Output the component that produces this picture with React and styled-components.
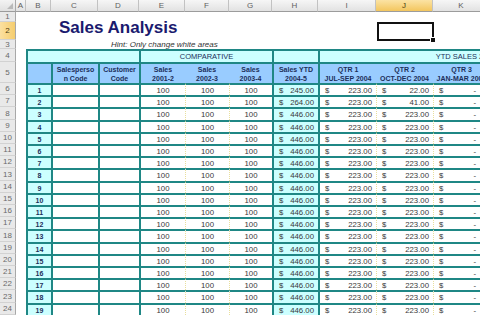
import React from 'react'
import styled, { createGlobalStyle, css } from 'styled-components'

const GlobalStyle = createGlobalStyle`
  html, body {
    margin: 0;
    padding: 0;
    width: 480px;
    height: 315px;
    overflow: hidden;
    background: #fff;
  }
  body {
    font-family: 'Liberation Sans', Arial, sans-serif;
  }
`

const TEAL = '#1f8785'
const CYAN = '#ccffff'
const BLUE = '#99ccff'
const DOT = '#e9df9c'
const NAVY = '#1c2f5a'

// sheet geometry: row header + columns A..M (only A..K show in the window)
const LETTERS = ['A', 'B', 'C', 'D', 'E', 'F', 'G', 'H', 'I', 'J', 'K', 'L', 'M']
const SHOWN = LETTERS.slice(0, 11)
const COL_WIDTHS = [16, 10, 25, 47, 41, 46, 44, 43, 46, 58, 57, 57, 57, 57]
const DATA_ROWS = 19
const dataHeights = Array.from({ length: DATA_ROWS }, (_, i) =>
  Math.round((i + 1) * 12.2) - Math.round(i * 12.2)
)
const ROW_HEIGHTS = [12, 10, 18, 9, 13, 21, ...dataHeights]

const col = (letter) => LETTERS.indexOf(letter) + 2
const row = (n) => n + 1

const place = css`
  grid-column: ${(p) => p.$c} / span ${(p) => p.$cs || 1};
  grid-row: ${(p) => p.$r} / span ${(p) => p.$rs || 1};
`

const Sheet = styled.div`
  display: grid;
  grid-template-columns: ${COL_WIDTHS.map((w) => `${w}px`).join(' ')};
  grid-template-rows: ${ROW_HEIGHTS.map((h) => `${h}px`).join(' ')};
  width: 480px;
  height: 315px;
  overflow: hidden;
`

const Corner = styled.div`
  ${place}
  position: relative;
  box-sizing: border-box;
  background: linear-gradient(#f3f3f3, #e0e0e0);
  border-right: 1px solid #a8a8a8;
  border-bottom: 1px solid #9c9c9c;
  &::after {
    content: '';
    position: absolute;
    right: 2px;
    bottom: 2px;
    border-left: 6px solid transparent;
    border-bottom: 6px solid #b9b9b9;
  }
`

const ColHead = styled.div`
  ${place}
  box-sizing: border-box;
  display: flex;
  align-items: center;
  justify-content: center;
  font-size: 8px;
  color: ${(p) => (p.$active ? '#4a3a10' : '#5f5f5f')};
  background: ${(p) =>
    p.$active ? 'linear-gradient(#fbe3a4, #f3c65e)' : 'linear-gradient(#f6f6f6, #e2e2e2)'};
  border-right: 1px solid #c2c2c2;
  border-bottom: 1px solid #9c9c9c;
`

const HeadFill = styled.div`
  ${place}
  background: linear-gradient(#f6f6f6, #e2e2e2);
  border-bottom: 1px solid #9c9c9c;
  box-sizing: border-box;
`

const RowHead = styled.div`
  ${place}
  box-sizing: border-box;
  display: flex;
  align-items: center;
  justify-content: center;
  font-size: 8px;
  color: ${(p) => (p.$active ? '#4a3a10' : '#6a6a6a')};
  background: ${(p) => (p.$active ? 'linear-gradient(90deg, #fbe0a0, #f5cd6e)' : '#e9e9e9')};
  border-right: 1px solid #a8a8a8;
  border-bottom: 1px solid #d2d2d2;
`

const Title = styled.div`
  ${place}
  display: flex;
  align-items: flex-end;
  padding: 0 0 4px 8px;
  font-size: 17px;
  line-height: 17px;
  font-weight: bold;
  color: #1a1a6e;
  white-space: nowrap;
`

const Hint = styled.div`
  ${place}
  display: flex;
  align-items: center;
  padding-left: 13px;
  font-size: 8px;
  font-style: italic;
  color: #333;
  white-space: nowrap;
`

const Selection = styled.div`
  ${place}
  position: relative;
  box-sizing: border-box;
  border: 2px solid #111;
  margin: 0 -1px -1px 1px;
`

const FillHandle = styled.span`
  position: absolute;
  right: -4px;
  bottom: -4px;
  width: 4px;
  height: 4px;
  background: #111;
  border: 1px solid #fff;
`

const edge = {
  thick: `2px solid ${TEAL}`,
  dot: `1px dotted ${DOT}`,
  none: 'none',
}

const Cell = styled.div`
  ${place}
  box-sizing: border-box;
  display: flex;
  align-items: center;
  justify-content: ${(p) => p.$justify || 'center'};
  border-top: 2px solid ${TEAL};
  border-left: ${(p) => edge[p.$edge || 'thick']};
  background: ${(p) => p.$bg || '#fff'};
  font-size: 7.8px;
  color: #3a3a3a;
  white-space: nowrap;
  overflow: hidden;
`

const Band = styled(Cell)`
  background: ${CYAN};
  color: ${NAVY};
  font-size: 7.5px;
  padding-left: ${(p) => p.$indent || 0}px;
`

const Head = styled(Cell)`
  flex-direction: column;
  background: ${BLUE};
  color: ${NAVY};
  font-weight: bold;
  font-size: 7px;
  line-height: 9px;
  padding-top: 1px;
`

const Num = styled(Cell)`
  background: ${CYAN};
  color: ${NAVY};
  font-weight: bold;
  font-size: 7px;
`

const Money = styled(Cell)`
  justify-content: space-between;
  padding: 0 ${(p) => p.$right || 4}px 0 5px;
`

const headers = [
  ['C', 'thick', 'Salesperso', 'n Code'],
  ['D', 'thick', 'Customer', 'Code'],
  ['E', 'thick', 'Sales', '2001-2'],
  ['F', 'none', 'Sales', '2002-3'],
  ['G', 'none', 'Sales', '2003-4'],
  ['H', 'thick', 'Sales YTD', '2004-5'],
  ['I', 'thick', 'QTR 1', 'JUL-SEP 2004'],
  ['J', 'none', 'QTR 2', 'OCT-DEC 2004'],
  ['K', 'none', 'QTR 3', 'JAN-MAR 2005'],
]

const ytd = (i) => (i === 0 ? '245.00' : i === 1 ? '264.00' : '446.00')
const qtr2 = (i) => (i === 0 ? '22.00' : i === 1 ? '41.00' : '223.00')

const App = () => {
  const rows = Array.from({ length: DATA_ROWS }, (_, i) => i)

  return (
    <>
      <GlobalStyle />
      <Sheet>
        <Corner $c={1} $r={1} />
        {SHOWN.map((l) => (
          <ColHead key={l} $c={col(l)} $r={1} $active={l === 'J'}>
            {l}
          </ColHead>
        ))}
        <HeadFill $c={col('L')} $cs={2} $r={1} />
        {Array.from({ length: 24 }, (_, i) => (
          <RowHead key={i} $c={1} $r={row(i + 1)} $active={i === 1}>
            {i + 1}
          </RowHead>
        ))}

        <Title $c={col('C')} $cs={7} $r={row(1)} $rs={2}>
          Sales Analysis
        </Title>
        <Selection $c={col('J')} $r={row(2)}>
          <FillHandle />
        </Selection>
        <Hint $c={col('D')} $cs={4} $r={row(3)}>
          Hint: Only change white areas
        </Hint>

        <Band $c={col('B')} $cs={3} $r={row(4)} />
        <Band $c={col('E')} $cs={3} $r={row(4)}>
          COMPARATIVE
        </Band>
        <Band $c={col('H')} $r={row(4)} />
        <Band $c={col('I')} $cs={5} $r={row(4)} $indent={14}>
          YTD SALES 2004-5
        </Band>

        <Head $c={col('B')} $r={row(5)} />
        {headers.map(([l, e, a, b]) => (
          <Head key={l} $c={col(l)} $r={row(5)} $edge={e}>
            <span>{a}</span>
            <span>{b}</span>
          </Head>
        ))}
        <Head $c={col('L')} $cs={2} $r={row(5)} $edge="none" />

        {rows.map((i) => {
          const r = row(6 + i)
          return (
            <React.Fragment key={i}>
              <Num $c={col('B')} $r={r}>{i + 1}</Num>
              <Cell $c={col('C')} $r={r} />
              <Cell $c={col('D')} $r={r} />
              <Cell $c={col('E')} $r={r}>100</Cell>
              <Cell $c={col('F')} $r={r} $edge="dot">100</Cell>
              <Cell $c={col('G')} $r={r} $edge="dot">100</Cell>
              <Money $c={col('H')} $r={r} $bg={CYAN}>
                <span>$</span>
                <span>{ytd(i)}</span>
              </Money>
              <Money $c={col('I')} $r={r}>
                <span>$</span>
                <span>223.00</span>
              </Money>
              <Money $c={col('J')} $r={r} $edge="dot">
                <span>$</span>
                <span>{qtr2(i)}</span>
              </Money>
              <Money $c={col('K')} $r={r} $edge="dot" $right={14}>
                <span>$</span>
                <span>-</span>
              </Money>
              <Cell $c={col('L')} $cs={2} $r={r} $edge="dot" />
            </React.Fragment>
          )
        })}
      </Sheet>
    </>
  )
}

export default App
